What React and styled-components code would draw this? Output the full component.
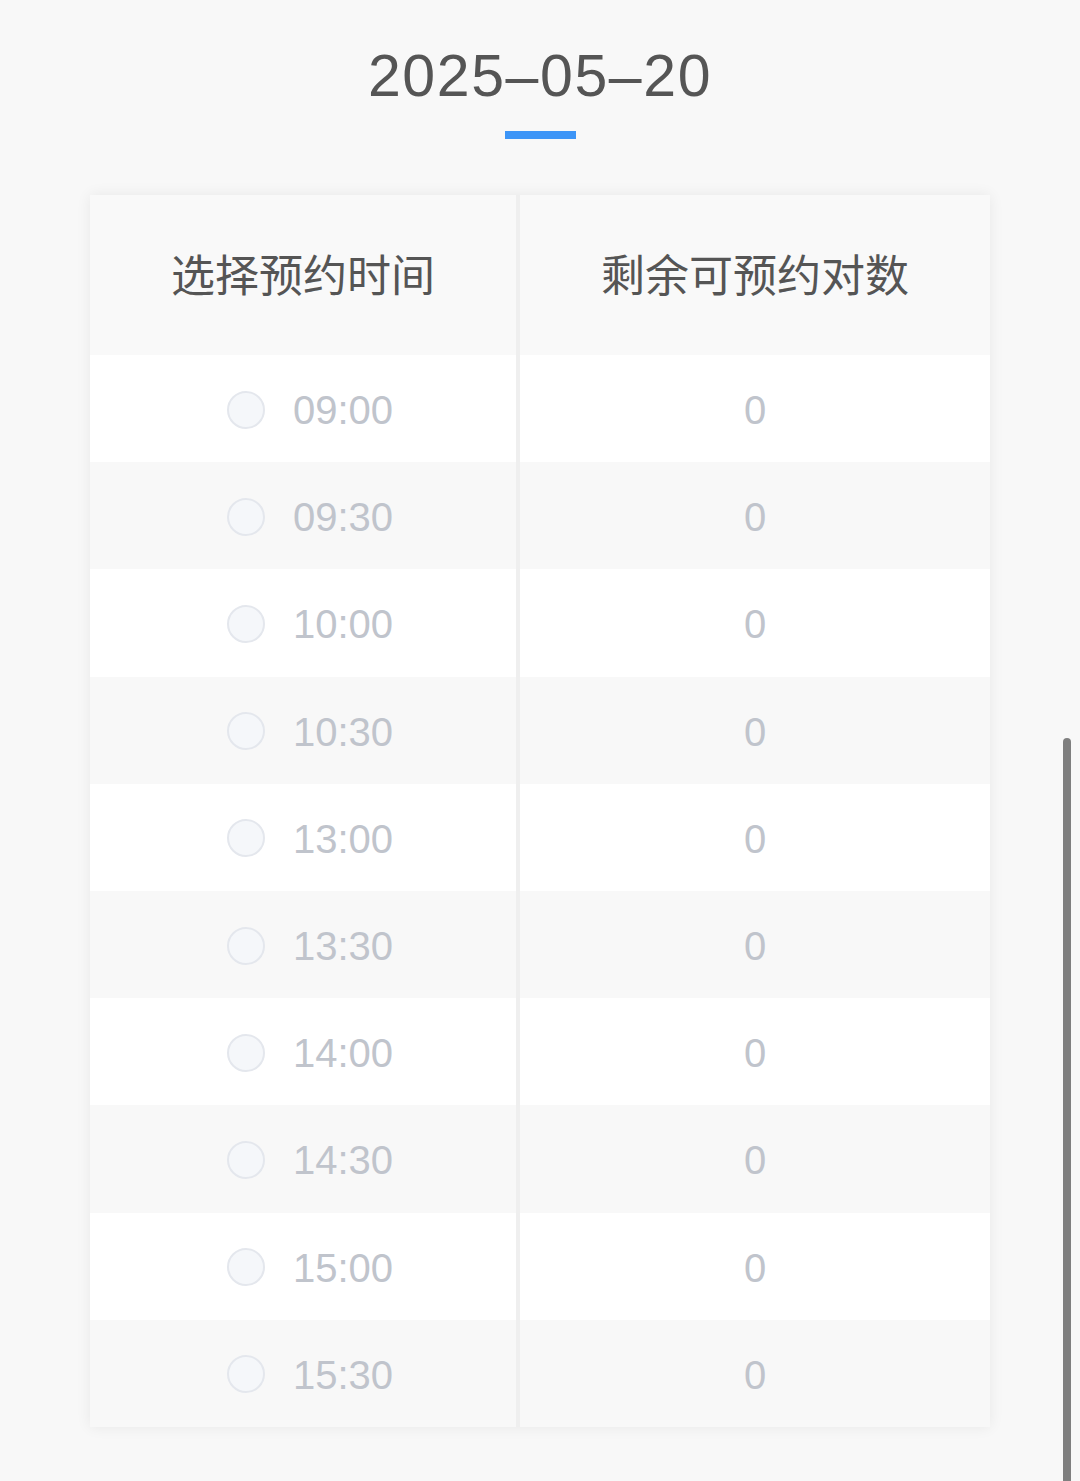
import React from "react";
import styled, { createGlobalStyle } from "styled-components";

const GlobalStyle = createGlobalStyle`
  html, body {
    margin: 0;
    padding: 0;
    background: #f8f8f8;
  }
  body {
    font-family: "Liberation Sans", "Noto Sans CJK SC", sans-serif;
  }
`;

const Page = styled.div`
  min-height: 1481px;
  display: flex;
  flex-direction: column;
  align-items: center;
  padding-top: 40px;
  box-sizing: border-box;
`;

const DateTitle = styled.h1`
  margin: 0;
  font-size: 59px;
  line-height: 72px;
  font-weight: 400;
  color: #555555;
  letter-spacing: 1.6px;
`;

const Underline = styled.div`
  width: 71px;
  height: 8px;
  margin-top: 19px;
  background: #3d95f7;
`;

const Card = styled.div`
  margin-top: 56px;
  width: 900px;
  display: grid;
  grid-template-columns: 426px 474px;
  background: #ffffff;
  box-shadow: 0 0 14px rgba(0, 0, 0, 0.07);
`;

const HeadCell = styled.div`
  height: 160px;
  display: flex;
  align-items: center;
  justify-content: center;
  padding-bottom: 5px;
  background: #f9f9f9;
  font-family: "Noto Sans CJK SC", "Liberation Sans", sans-serif;
  font-size: 44px;
  color: #555555;
  box-sizing: border-box;
  border-left: ${(p) => (p.$right ? "4px solid #efefef" : "none")};
`;

const Cell = styled.div`
  height: 107.2px;
  display: flex;
  align-items: center;
  justify-content: center;
  gap: 28px;
  box-sizing: border-box;
  padding-top: 4px;
  padding-left: ${(p) => (p.$right ? "0" : "14px")};
  background: ${(p) => (p.$odd ? "#f8f8f8" : "#ffffff")};
  border-left: ${(p) => (p.$right ? "4px solid #efefef" : "none")};
`;

const Radio = styled.span`
  width: 38px;
  height: 38px;
  margin-top: -2px;
  border-radius: 50%;
  box-sizing: border-box;
  border: 2px solid #e4e7ed;
  background: #f5f7fa;
  flex-shrink: 0;
`;

const TimeText = styled.span`
  font-size: 40px;
  color: #c0c4cc;
  min-width: 96px;
  text-align: left;
`;

const Count = styled.span`
  font-size: 40px;
  color: #c0c4cc;
`;

const ScrollThumb = styled.div`
  position: fixed;
  left: 1063px;
  top: 738px;
  width: 8px;
  height: 780px;
  border-radius: 4px;
  background: #7f7f7f;
`;

const slots = [
  "09:00",
  "09:30",
  "10:00",
  "10:30",
  "13:00",
  "13:30",
  "14:00",
  "14:30",
  "15:00",
  "15:30",
];

export default function App() {
  return (
    <>
      <GlobalStyle />
      <Page>
        <DateTitle>2025–05–20</DateTitle>
        <Underline />
        <Card>
          <HeadCell>选择预约时间</HeadCell>
          <HeadCell $right>剩余可预约对数</HeadCell>
          {slots.map((t, i) => (
            <React.Fragment key={t}>
              <Cell $odd={i % 2 === 1}>
                <Radio />
                <TimeText>{t}</TimeText>
              </Cell>
              <Cell $odd={i % 2 === 1} $right>
                <Count>0</Count>
              </Cell>
            </React.Fragment>
          ))}
        </Card>
      </Page>
      <ScrollThumb />
    </>
  );
}
